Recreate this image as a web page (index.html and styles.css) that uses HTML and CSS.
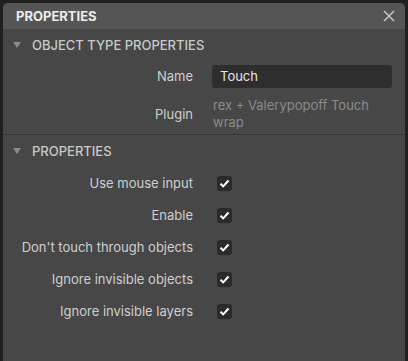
FILE: index.html
```html
<!DOCTYPE html>
<html>
<head>
<meta charset="utf-8">
<link rel="stylesheet" href="styles.css">
</head>
<body>
<div class="panel">
  <div class="titlebar">
    <span class="title">PROPERTIES</span>
    <svg class="close" width="12" height="12" viewBox="0 0 12 12"><path d="M1 1L11 11M11 1L1 11" stroke="#c4c4c4" stroke-width="1.6" fill="none"/></svg>
  </div>
  <div class="section">
    <div class="section-head"><span class="tri"></span>OBJECT TYPE PROPERTIES</div>
    <div class="row row-name">
      <div class="label">Name</div>
      <div class="value"><div class="input">Touch</div></div>
    </div>
    <div class="row row-plugin">
      <div class="label">Plugin</div>
      <div class="value plugin">rex + Valerypopoff Touch wrap</div>
    </div>
  </div>
  <div class="section sep">
    <div class="section-head"><span class="tri"></span>PROPERTIES</div>
    <div class="row row-check"><div class="label">Use mouse input</div><div class="value"><span class="cb"><svg width="15" height="15" viewBox="0 0 15 15"><path d="M3.5 7.8L6.2 10.4L11.5 4.5" stroke="#fff" stroke-width="2" fill="none"/></svg></span></div></div>
    <div class="row row-check"><div class="label">Enable</div><div class="value"><span class="cb"><svg width="15" height="15" viewBox="0 0 15 15"><path d="M3.5 7.8L6.2 10.4L11.5 4.5" stroke="#fff" stroke-width="2" fill="none"/></svg></span></div></div>
    <div class="row row-check"><div class="label">Don't touch through objects</div><div class="value"><span class="cb"><svg width="15" height="15" viewBox="0 0 15 15"><path d="M3.5 7.8L6.2 10.4L11.5 4.5" stroke="#fff" stroke-width="2" fill="none"/></svg></span></div></div>
    <div class="row row-check"><div class="label">Ignore invisible objects</div><div class="value"><span class="cb"><svg width="15" height="15" viewBox="0 0 15 15"><path d="M3.5 7.8L6.2 10.4L11.5 4.5" stroke="#fff" stroke-width="2" fill="none"/></svg></span></div></div>
    <div class="row row-check"><div class="label">Ignore invisible layers</div><div class="value"><span class="cb"><svg width="15" height="15" viewBox="0 0 15 15"><path d="M3.5 7.8L6.2 10.4L11.5 4.5" stroke="#fff" stroke-width="2" fill="none"/></svg></span></div></div>
  </div>
</div>
</body>
</html>
```
FILE: styles.css
```css
html, body {
  margin: 0;
  padding: 0;
  background: #202020;
  height: 361px;
  overflow: hidden;
}
body {
  font-family: Inter, "Noto Sans", sans-serif;
  font-size: 13px;
}
.panel {
  margin: 3px 3px 0 3px;
  height: 358px;
  background: #474747;
  border-radius: 5px 5px 0 0;
  overflow: hidden;
}
.titlebar {
  height: 26px;
  background: #555555;
  display: flex;
  align-items: center;
  justify-content: space-between;
  padding: 0 10px 0 13px;
}
.title {
  color: #ececec;
  font-weight: 700;
  font-size: 13px;
}
.close {
  display: block;
}
.section-head {
  height: 32px;
  display: flex;
  align-items: center;
  color: #c9c9c9;
  font-size: 13px;
  font-weight: 500;
  padding-left: 10px;
}
.tri {
  width: 0;
  height: 0;
  border-left: 4px solid transparent;
  border-right: 4px solid transparent;
  border-top: 6px solid #8a8a8a;
  margin-right: 11px;
}
.row {
  display: grid;
  grid-template-columns: 190px 1fr;
  column-gap: 19px;
  align-items: center;
}
.label {
  text-align: right;
  color: #cfcfcf;
}
.row-name {
  height: 30px;
}
.input {
  height: 23px;
  width: 180px;
  background: #2e2e2e;
  border-radius: 3px;
  box-sizing: border-box;
  padding-left: 8px;
  display: flex;
  align-items: center;
  color: #e6e6e6;
}
.row-plugin {
  padding: 6px 0 2px;
}
.plugin {
  color: #8b8b8b;
  line-height: 17px;
  padding-left: 1px;
  width: 170px;
}
.sep {
  border-top: 1px solid #353535;
  margin-top: 1px;
}
.sep .section-head {
  height: 32px;
}
.row-check {
  height: 32px;
}
.cb {
  display: block;
  width: 15px;
  height: 15px;
  margin-left: 5px;
  background: #2b2b2b;
  border-radius: 3px;
}
.cb svg {
  display: block;
}
```
